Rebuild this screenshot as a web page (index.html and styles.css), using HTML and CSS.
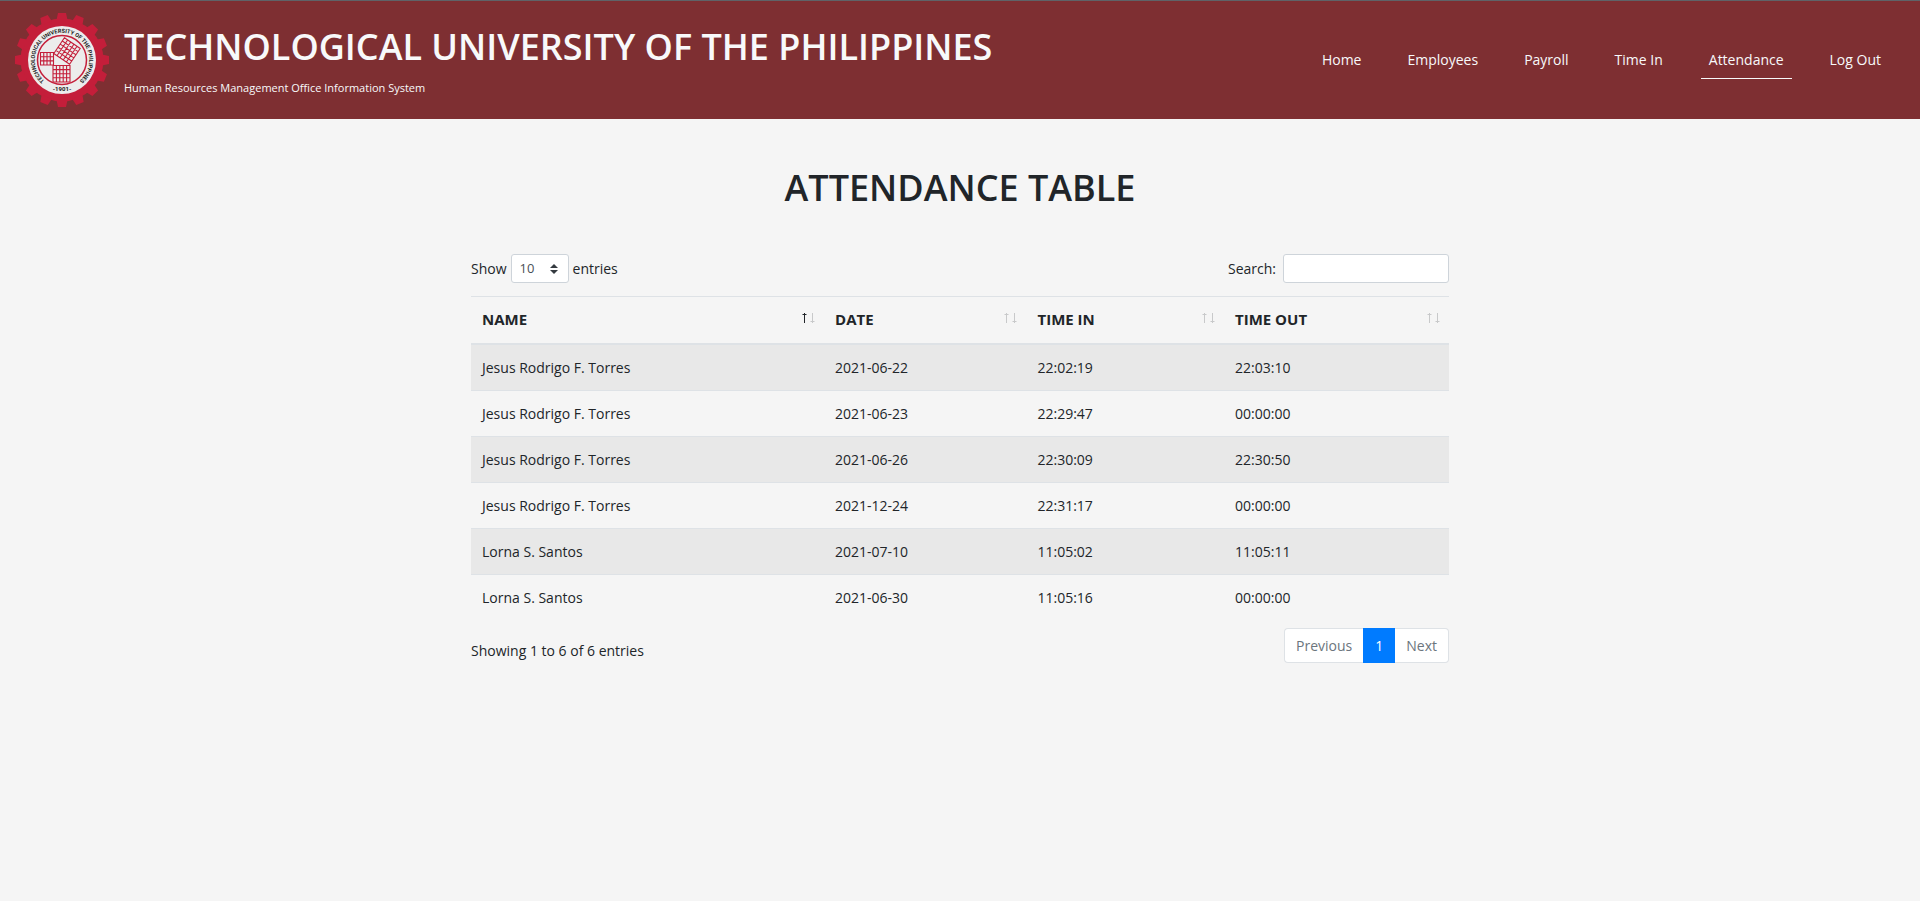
FILE: index.html
```
<!DOCTYPE html>
<html lang="en">
<head>
<meta charset="utf-8">
<title>Attendance</title>
<link rel="stylesheet" href="styles.css">
</head>
<body>
<header class="navbar">
  <a class="brand" href="#">
    <svg class="logo" viewBox="-48 -48 96 96" role="img" aria-label="University seal">
      <defs>
        <path id="arc-top" d="M-14 23.300A27.200 27.200 0 1 1 14 23.300"/>
      </defs>
      <circle r="41.500" fill="#c41e3a"/>
      <g fill="#c41e3a">
        <g id="teeth4"><g id="teeth2"><path id="tooth" d="M-5.500-40L-4-47H4L5.500-40ZM-5.500 40L-4 47H4L5.500 40Z"/><use href="#tooth" transform="rotate(22.500)"/></g><use href="#teeth2" transform="rotate(45)"/></g>
        <use href="#teeth4" transform="rotate(90)"/>
      </g>
      <circle r="34" fill="#ececec"/>
      <circle r="24.500" fill="#ececec" stroke="#c41e3a" stroke-width="1.500"/>
      <g fill="none" stroke="#c41e3a" stroke-width="1.100">
        <path d="M-21.500-7.500H-8.500V5H-21.500ZM-18.250-7.500V5M-15-7.500V5M-11.750-7.500V5M-21.500-3.300H-8.500M-21.500.9H-8.500"/>
        <path d="M-9 5.500H8V22H-9ZM-5.600 5.500V22M-2.200 5.500V22M1.200 5.500V22M4.600 5.500V22M-9 9.600H8M-9 13.700H8M-9 17.800H8"/>
        <path transform="translate(5 -9) rotate(34)" d="M-9.500-9.500H9.500V9.500H-9.500ZM-5.700-9.500V9.500M-1.900-9.500V9.500M1.900-9.500V9.500M5.700-9.500V9.500M-9.500-5.700H9.500M-9.500-1.900H9.500M-9.500 1.900H9.500M-9.500 5.700H9.500"/>
      </g>
      <text class="seal-text" font-size="5.600"><textPath href="#arc-top" startOffset="50%" text-anchor="middle">TECHNOLOGICAL UNIVERSITY OF THE PHILIPPINES</textPath></text>
      <text class="seal-text" font-size="6" y="31" text-anchor="middle">-1901-</text>
    </svg>
    <span class="brand-text">
      <span class="brand-title">TECHNOLOGICAL UNIVERSITY OF THE PHILIPPINES</span>
      <span class="brand-sub">Human Resources Management Office Information System</span>
    </span>
  </a>
  <nav class="menu">
    <a href="#">Home</a>
    <a href="#">Employees</a>
    <a href="#">Payroll</a>
    <a href="#">Time In</a>
    <a class="active" href="#">Attendance</a>
    <a href="#">Log Out</a>
  </nav>
</header>
<main class="content">
  <h1 class="page-title">ATTENDANCE TABLE</h1>
  <div class="controls">
    <div class="length">
      <label for="len">Show</label>
      <span class="select-wrap">
        <select id="len"><option>10</option><option>25</option><option>50</option><option>100</option></select>
        <svg class="caret" viewBox="0 0 8 10" aria-hidden="true"><path d="M4 0L8 4H0ZM4 10L0 6H8Z"/></svg>
      </span>
      <span>entries</span>
    </div>
    <div class="search">
      <label for="search">Search:</label>
      <input id="search" type="search">
    </div>
  </div>
  <table class="records">
    <colgroup><col class="c-name"><col class="c-date"><col class="c-in"><col class="c-out"></colgroup>
    <thead>
      <tr>
        <th class="sorted"><button type="button">NAME <svg class="sort" viewBox="0 0 13 10" aria-hidden="true"><path class="up" d="M2.500 0V10M.5 1.500H4.500"/><path class="down" d="M10.500 0V10M8.500 8.500H12.500"/></svg></button></th>
        <th><button type="button">DATE <svg class="sort" viewBox="0 0 13 10" aria-hidden="true"><path class="up" d="M2.500 0V10M.5 1.500H4.500"/><path class="down" d="M10.500 0V10M8.500 8.500H12.500"/></svg></button></th>
        <th><button type="button">TIME IN <svg class="sort" viewBox="0 0 13 10" aria-hidden="true"><path class="up" d="M2.500 0V10M.5 1.500H4.500"/><path class="down" d="M10.500 0V10M8.500 8.500H12.500"/></svg></button></th>
        <th><button type="button">TIME OUT <svg class="sort" viewBox="0 0 13 10" aria-hidden="true"><path class="up" d="M2.500 0V10M.5 1.500H4.500"/><path class="down" d="M10.500 0V10M8.500 8.500H12.500"/></svg></button></th>
      </tr>
    </thead>
    <tbody>
      <tr><td>Jesus Rodrigo F. Torres</td><td>2021-06-22</td><td>22:02:19</td><td>22:03:10</td></tr>
      <tr><td>Jesus Rodrigo F. Torres</td><td>2021-06-23</td><td>22:29:47</td><td>00:00:00</td></tr>
      <tr><td>Jesus Rodrigo F. Torres</td><td>2021-06-26</td><td>22:30:09</td><td>22:30:50</td></tr>
      <tr><td>Jesus Rodrigo F. Torres</td><td>2021-12-24</td><td>22:31:17</td><td>00:00:00</td></tr>
      <tr><td>Lorna S. Santos</td><td>2021-07-10</td><td>11:05:02</td><td>11:05:11</td></tr>
      <tr><td>Lorna S. Santos</td><td>2021-06-30</td><td>11:05:16</td><td>00:00:00</td></tr>
    </tbody>
  </table>
  <div class="footer">
    <p class="info">Showing 1 to 6 of 6 entries</p>
    <nav class="pages" aria-label="Pages">
      <button type="button" class="page" disabled>Previous</button>
      <button type="button" class="page current">1</button>
      <button type="button" class="page" disabled>Next</button>
    </nav>
  </div>
</main>
</body>
</html>
```
FILE: styles.css
```
* { box-sizing: border-box; }
body {
  margin: 0;
  background: #f5f5f5;
  color: #212529;
  font: 14px/23px "Open Sans", "Noto Sans", sans-serif;
}
button, input, select { font: inherit; color: inherit; }

.navbar {
  display: flex;
  align-items: center;
  justify-content: space-between;
  padding: 11px 31px 11px 14px;
  border-top: 1px solid #5f6368;
  background: #7e2f32;
  color: #f8f9fa;
}
.brand { display: flex; align-items: center; gap: 14px; color: inherit; text-decoration: none; }
.logo { width: 96px; height: 96px; }
.seal-text { font-family: "Liberation Sans Narrow", "Roboto", sans-serif; font-weight: 700; fill: #222; }
.brand-text { display: flex; flex-direction: column; gap: 8px; }
.brand-title { font-size: 36px; line-height: 48px; font-weight: 600; }
.brand-sub { font-size: 11px; line-height: 18px; }
.menu { display: flex; gap: 30px; }
.menu a {
  padding: 7px 8px;
  border-bottom: 1px solid transparent;
  color: inherit;
  text-decoration: none;
}
.menu .active { border-color: #f8f9fa; }

.content { max-width: 978px; margin: 0 auto; padding-top: 45px; }
.page-title {
  margin: 0 0 42px;
  font-size: 36px;
  line-height: 48px;
  font-weight: 600;
  text-align: center;
}
.controls { display: flex; justify-content: space-between; margin-bottom: 13px; }
.length, .search { display: flex; align-items: center; }
.length { gap: 4px; }
.search { gap: 7px; }
.select-wrap { position: relative; display: flex; }
.caret { position: absolute; right: 11px; top: 10px; width: 8px; height: 10px; fill: #343a40; pointer-events: none; }
select, input {
  height: 29px;
  border: 1px solid #ced4da;
  border-radius: 3px;
  background: #fff;
  outline: 0;
}
select { appearance: none; width: 58px; padding: 0 8px; font-size: 13px; color: #495057; }
input { width: 166px; padding: 0 8px; }

.records { width: 100%; table-layout: fixed; border-spacing: 0; }
.c-name { width: 36.1%; }
.c-date { width: 20.7%; }
.c-in { width: 20.2%; }
.c-out { width: 23%; }
th { padding: 0; border-top: 1px solid #dee2e6; border-bottom: 2px solid #dee2e6; }
th button {
  display: flex;
  align-items: center;
  justify-content: space-between;
  width: 100%;
  padding: 11px 9px 12px 11px;
  border: 0;
  background: none;
  font-size: 15px;
  font-weight: 700;
}
.sort { width: 13px; height: 10px; margin-bottom: 4px; fill: none; stroke: #c8c9ca; }
.sorted .up { stroke: #212529; }
td { padding: 11px; }
tr + tr td { border-top: 1px solid #dee2e6; }
tbody tr:nth-child(odd) { background: #e8e8e8; }

.footer { display: flex; justify-content: space-between; align-items: flex-start; padding-top: 8px; }
.info { margin: 0; padding-top: 11px; }
.pages { display: flex; }
.page {
  padding: 5px 11px;
  border: 1px solid #dee2e6;
  background: #fff;
  color: #6c757d;
}
.page:first-child { border-right: 0; border-radius: 4px 0 0 4px; }
.page:last-child { border-left: 0; border-radius: 0 4px 4px 0; }
.page.current { border-color: #007bff; background: #007bff; color: #fff; }
```
